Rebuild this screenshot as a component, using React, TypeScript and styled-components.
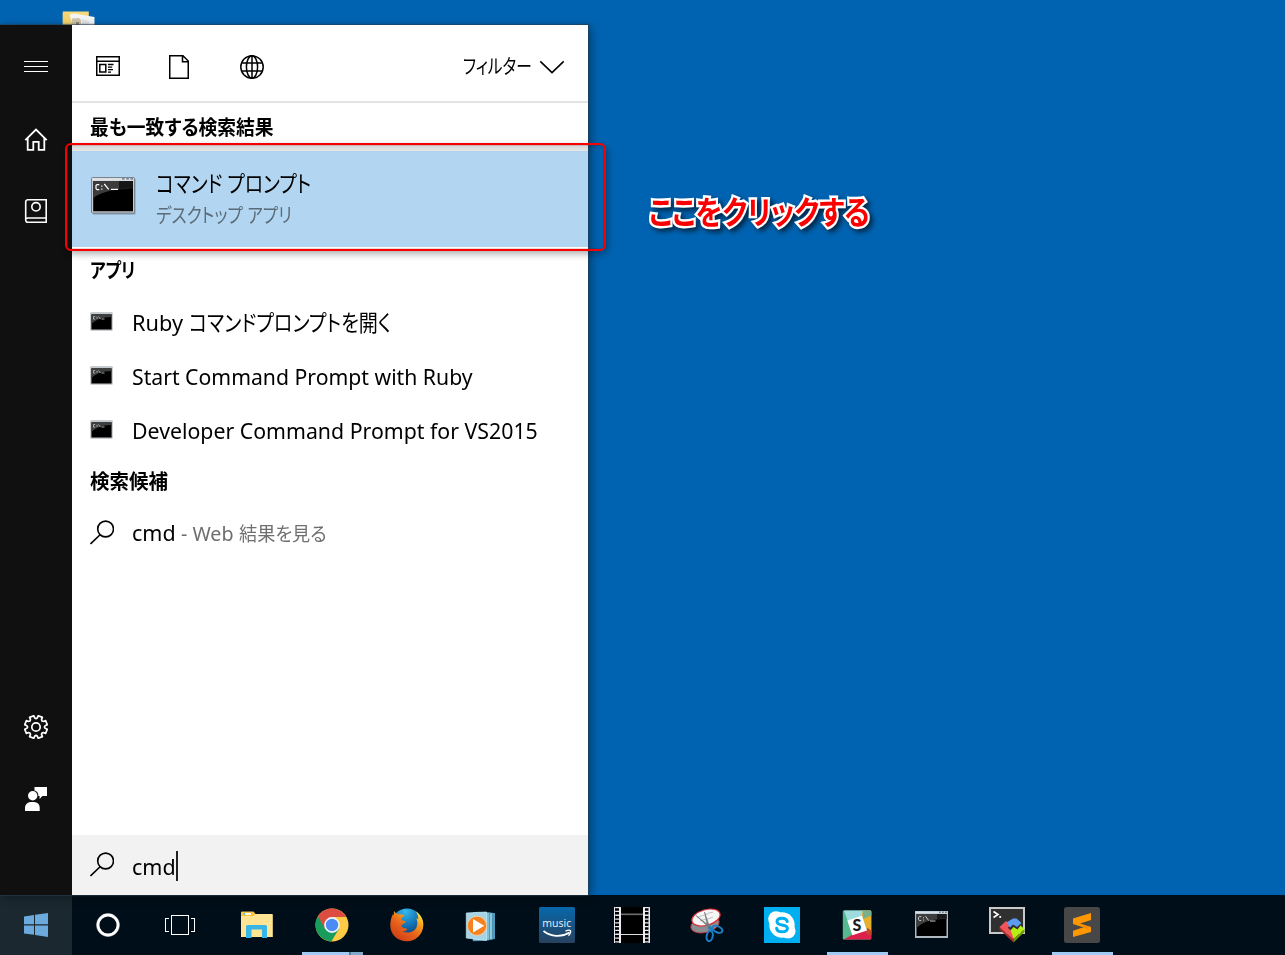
import React, { useLayoutEffect, useRef } from "react";
import styled, { createGlobalStyle, css } from "styled-components";

const GlobalStyle = createGlobalStyle`
  * { box-sizing: border-box; }
  body {
    margin: 0;
    background: #0063b1;
    font-family: "Noto Sans", "Noto Sans CJK JP", sans-serif;
    overflow: hidden;
  }
  svg { display: block; flex: none; }
`;

/* ---------- text that is condensed to a given advance width ---------- */

const FitBox = styled.span<{ $w: number }>`
  display: inline-block;
  width: ${(p) => p.$w}px;
  white-space: nowrap;
`;
const FitInner = styled.span`
  display: inline-block;
  transform-origin: 0 50%;
  font-feature-settings: "palt";
`;
function Fit({ w, children }: { w: number; children: React.ReactNode }) {
  const ref = useRef<HTMLSpanElement>(null);
  useLayoutEffect(() => {
    const el = ref.current;
    if (el && el.offsetWidth) el.style.transform = `scaleX(${w / el.offsetWidth})`;
  }, [w]);
  return (
    <FitBox $w={w}>
      <FitInner ref={ref}>{children}</FitInner>
    </FitBox>
  );
}

/* ---------- layout ---------- */

const Desktop = styled.div`
  position: relative;
  display: flex;
  flex-direction: column;
  width: 1285px;
  height: 955px;
  background: #0063b1;
  overflow: hidden;
`;
const Workspace = styled.div`
  display: flex;
  height: 895px;
  padding-top: 25px;
`;
const StartMenu = styled.div`
  position: relative;
  display: flex;
  width: 588px;
  box-shadow: 0 0 1px 1px rgba(40, 60, 80, 0.6), 3px 2px 9px rgba(0, 0, 0, 0.38);
`;
const Rail = styled.nav`
  display: flex;
  flex-direction: column;
  width: 72px;
  padding: 6px 0 60px;
  background: #101010;
`;
const RailItem = styled.div`
  display: flex;
  align-items: center;
  justify-content: center;
  width: 72px;
  height: 72px;
`;
const Grow = styled.div`
  flex: 1;
`;
const Panel = styled.section`
  display: flex;
  flex-direction: column;
  width: 516px;
  background: #fff;
  color: #000;
`;
const FilterBar = styled.header`
  display: flex;
  align-items: center;
  height: 78px;
  padding: 8px 23px 0 24px;
  border-bottom: 2px solid #e4e4e4;
`;
const FilterIcons = styled.div`
  display: flex;
  gap: 48px;
`;
const FilterMenu = styled.div`
  display: flex;
  align-items: center;
  gap: 7px;
  margin-left: auto;
  font-size: 20px;
  line-height: 24px;
`;
const Heading = styled.h2<{ $h: number; $drop?: number; $lift?: number }>`
  display: flex;
  align-items: center;
  height: ${(p) => p.$h}px;
  margin: 0;
  padding: ${(p) => p.$drop ?? 0}px 0 ${(p) => p.$lift ?? 0}px 18px;
  font-size: 20px;
  line-height: 28px;
  font-weight: 700;
`;
const BestMatch = styled.div`
  display: flex;
  align-items: center;
  gap: 20px;
  height: 102px;
  padding-left: 18px;
  border-top: 6px solid #e9e9e9;
  background: #b2d6f1;
`;
const BestIcon = styled.div`
  padding: 0 0 7px 1px;
`;
const BestText = styled.div`
  display: flex;
  flex-direction: column;
`;
const BestTitle = styled.div`
  font-size: 23px;
  line-height: 32px;
`;
const BestSub = styled.div`
  padding-top: 1px;
  font-size: 20px;
  line-height: 32px;
  color: #5b6b78;
`;
const Result = styled.div`
  display: flex;
  align-items: center;
  gap: 18px;
  height: 54px;
  padding-left: 18px;
  font-size: 22.5px;
  line-height: 30px;
`;
const Hint = styled.span`
  display: inline-block;
  margin-left: 5px;
  font-size: 19px;
  color: #6f6f6f;
`;
const SearchBox = styled.div`
  display: flex;
  align-items: center;
  gap: 18px;
  height: 60px;
  margin-top: auto;
  padding-left: 18px;
  background: #f2f2f2;
  font-size: 22.5px;
  line-height: 30px;
`;
const Query = styled.div`
  display: flex;
  align-items: center;
  padding-top: 2px;
`;
const QueryText = styled.div`
  padding-top: 2px;
`;
const Caret = styled.div`
  width: 2px;
  height: 30px;
  margin-bottom: 1px;
  background: #222;
`;

/* ---------- desktop overlays ---------- */

const FolderSpot = styled.div`
  position: absolute;
  left: 62px;
  top: 10px;
`;
const Marker = styled.div`
  position: absolute;
  left: 65px;
  top: 143px;
  width: 541px;
  height: 108px;
  border: 2px solid #f60000;
  border-radius: 6px;
  box-shadow: 2px 3px 7px rgba(0, 0, 0, 0.32), inset 0 0 0 1px rgba(120, 0, 0, 0.14),
    inset 2px 3px 5px rgba(0, 0, 0, 0.1);
`;
const Callout = styled.div`
  position: absolute;
  left: 649px;
  top: 190px;
  font-size: 32px;
  line-height: 44px;
  font-weight: 700;
  color: #fa0000;
  -webkit-text-stroke: 5px #fff;
  paint-order: stroke fill;
  stroke-linejoin: round;
  filter: drop-shadow(3px 3px 2.5px rgba(0, 0, 0, 0.6));
`;

/* ---------- taskbar ---------- */

const Taskbar = styled.footer`
  display: flex;
  height: 60px;
  background: #000e19;
`;
const SystemButton = styled.div<{ $active?: boolean }>`
  display: flex;
  align-items: center;
  justify-content: center;
  width: 72px;
  background: ${(p) => (p.$active ? "#1b2830" : "transparent")};
`;
const Pinned = styled.div`
  display: flex;
  padding-left: 4px;
`;
const AppButton = styled.div<{ $running?: boolean; $stacked?: boolean }>`
  display: flex;
  flex-direction: column;
  align-items: center;
  width: 75px;
  padding: 12px 1px 0 0;
  &::after {
    content: "";
    width: 61px;
    height: 3px;
    margin: 9px -1px 0 0;
    background: ${(p) => (p.$running ? "#9fcbf5" : "transparent")};
    ${(p) =>
      p.$stacked &&
      css`
        background: linear-gradient(90deg, #9fcbf5 47px, #5c7b94 47px, #5c7b94 49px, #83a9ca 49px);
      `}
  }
`;

/* ---------- icons ---------- */

const MenuIcon = () => (
  <svg width="24" height="24" viewBox="0 0 24 24" fill="#fff" shapeRendering="crispEdges">
    <path d="M0 6h24v1H0zM0 11h24v1H0zM0 16h24v1H0z" />
  </svg>
);
const HomeIcon = () => (
  <svg width="24" height="24" viewBox="0 0 24 24" fill="none" stroke="#fff" strokeWidth="1.8">
    <path d="M1.3 13.2 12 2.6l10.7 10.6M3.700 11.300v11.500h5.600v-8h5.400v8h5.600V11.300" />
  </svg>
);
const BookIcon = () => (
  <svg width="24" height="26" viewBox="0 0 24 26" fill="none" stroke="#fff" strokeWidth="1.6">
    <path d="M22.2 24.2H4a2.3 2.3 0 0 1-2.3-2.3V3.7A2.3 2.3 0 0 1 4 1.7h18.2zM2 21c.3-.7 1-1 2-1h18" />
    <circle cx="12" cy="8.8" r="4.2" />
  </svg>
);
const gearPath = (() => {
  const parts: string[] = [];
  const pt = (r: number, deg: number) => {
    const a = (deg * Math.PI) / 180;
    return `${(12 + r * Math.cos(a)).toFixed(2)} ${(12 + r * Math.sin(a)).toFixed(2)}`;
  };
  for (let i = 0; i < 8; i++) {
    const c = i * 45 + 22.5;
    parts.push(`${i ? "L" : "M"}${pt(11.5, c - 11)}L${pt(11.5, c + 11)}L${pt(9.2, c + 14.5)}Q${pt(7.9, c + 22.5)} ${pt(9.2, c + 30.5)}`);
  }
  return parts.join("") + "Z";
})();
const GearIcon = () => (
  <svg width="24" height="24" viewBox="0 0 24 24" fill="none" stroke="#fff" strokeWidth="1.7" strokeLinejoin="round">
    <path d={gearPath} />
    <circle cx="12" cy="12" r="4.2" />
  </svg>
);
const FeedbackIcon = () => (
  <svg width="24" height="24" viewBox="0 0 24 24" fill="#fff">
    <path d="M10.5 0H23v9h-4.6l-2.8 2.9V9h-1.2A5.6 5.6 0 0 0 10.5 3.4z" />
    <circle cx="8.7" cy="8.8" r="4.7" />
    <path d="M1 24v-3.4A5.6 5.6 0 0 1 6.6 15H10a5.6 5.6 0 0 1 5.7 5.6V24z" />
  </svg>
);
const AppsIcon = () => (
  <svg width="24" height="24" viewBox="0 0 24 24" fill="none" stroke="#000" strokeWidth="1.5">
    <path d="M.75 1.75h22.5v18.5H.75zM.75 6.2h22.5M3.8 9.5h6v7.6h-6z" />
    <path d="M12 9.5h5.5M12 12.2h4.2M12 14.6h5M12 17.1h3" strokeWidth="1.3" />
  </svg>
);
const DocIcon = () => (
  <svg width="24" height="24" viewBox="0 0 24 24" fill="none" stroke="#000" strokeWidth="1.5">
    <path d="M1.75.75h13.2l5.3 5.3v17.2H1.75zM14.5.75v5.9h5.7" />
  </svg>
);
const GlobeIcon = () => (
  <svg width="24" height="24" viewBox="0 0 24 24" fill="none" stroke="#000" strokeWidth="1.5">
    <circle cx="12" cy="12" r="11.2" />
    <ellipse cx="12" cy="12" rx="5.6" ry="11.2" />
    <path d="M12 1v22M1.6 8h20.8M1.6 16h20.8" />
  </svg>
);
const ChevronIcon = () => (
  <svg width="26" height="14" viewBox="0 0 26 14" fill="none" stroke="#000" strokeWidth="1.6">
    <path d="M1.3 1.4 13 12.6 24.7 1.4" />
  </svg>
);
const SearchIcon = () => (
  <svg width="24" height="26" viewBox="0 0 24 26" fill="none" stroke="#000" strokeWidth="1.6">
    <circle cx="15.6" cy="9" r="7.9" />
    <path d="M10.1 14.7.5 24" />
  </svg>
);

const ConsoleLarge = ({ w, h }: { w: number; h: number }) => (
  <svg width={w} height={h} viewBox="0 0 45 38">
    <rect x="1.5" y="1.5" width="43" height="36" rx="1" fill="#6c8296" opacity=".7" />
    <rect x=".5" y=".5" width="43" height="35.5" rx="1" fill="#c9cdd1" stroke="#7b8288" />
    <rect x="1.5" y="1.2" width="41" height="2.4" fill="#dfe3e7" />
    <path d="M31 1.8h2.6M35.3 1.8h2.6M39.4 1.8H42" stroke="#5a6c84" strokeWidth="1.2" />
    <rect x="2.2" y="4" width="39.8" height="30.3" fill="#000" />
    <path d="M2.2 4H38v8C22 11.500 9 16 2.200 21z" fill="#3c3c3c" />
    <path d="M28 4h14v8c-5-.3-10-.1-14 .2z" fill="#161616" />
    <path
      d="M8.300 7.600H6L5 8.600v3l1 1H8.300M10.800 8.400v1.300M10.800 11.400v1.300M13.300 7l4.400 5.400"
      stroke="#fff"
      strokeWidth="1.2"
      fill="none"
    />
    <path d="M20 12.400h7" stroke="#fff" strokeWidth="1.2" />
  </svg>
);
const ConsoleSmallSvg = styled.svg`
  margin-bottom: 2px;
`;
const ConsoleSmall = () => (
  <ConsoleSmallSvg width="24" height="20" viewBox="0 0 24 20">
    <rect x=".5" y=".5" width="22" height="18" rx=".6" fill="#9da2a7" />
    <rect x=".5" y=".5" width="22" height="1.600" fill="#c3c9ce" />
    <rect x="1.500" y="2.400" width="20" height="15" fill="#000" />
    <path d="M1.500 2.400h20V5C12 5 5.500 8 1.500 12z" fill="#3d3f3f" />
    <path d="M5.200 4.500H3.500v2.600h1.700M7 4.800v2M8.500 4.500l2 2.600M11.500 7h3" stroke="#b5b5b5" strokeWidth=".9" fill="none" />
  </ConsoleSmallSvg>
);

const FolderPeek = () => (
  <svg width="33" height="15" viewBox="0 0 33 15">
    <path d="M.8 1.500h26V15H.8z" fill="#f6da7c" />
    <path d="M4 5.500 12 3.500l20.500 3.500V15H9z" fill="#f4f5f5" />
    <path d="M.8 3h6l4 12H.8z" fill="#f3d470" />
    <path d="M10 8.500l7-.5 2 2v5h-9z" fill="#cfc5ad" />
    <path d="M14 12h3v3h-3z" fill="#8f866f" />
    <path d="M20 9l7 2v4h-7z" fill="#e2e4e5" />
  </svg>
);

const WindowsIcon = () => (
  <svg width="24" height="24" viewBox="0 0 24 24" fill="#6ca9dc">
    <path d="M0 3.400 10 2v9.300H0zM11 1.800 24 0v11.300H11zM0 12.400h10v9.400L0 20.500zM11 12.400h13V24l-13-1.900z" />
  </svg>
);
const CortanaIcon = () => (
  <svg width="24" height="24" viewBox="0 0 24 24" fill="none">
    <circle cx="12" cy="12" r="10" stroke="#fff" strokeWidth="2.800" />
    <circle cx="12" cy="12" r="11.500" stroke="#fff" strokeWidth=".8" opacity=".5" />
  </svg>
);
const TaskViewIcon = () => (
  <svg width="30" height="20" viewBox="0 0 30 20" fill="none" stroke="#fff" strokeWidth="1" shapeRendering="crispEdges">
    <path d="M6.500.5h17v19h-17zM4 3.500H.5v13H4M26 3.500h3.500v13H26" />
  </svg>
);
const ExplorerIcon = () => (
  <svg width="36" height="36" viewBox="0 0 36 36">
    <path d="M2 5.500q0-.8.8-.8h11.700l1.800 2.300H33q.8 0 .8.800V30H2z" fill="#ffe593" />
    <path d="M2 5.500q0-.8.8-.8h11.700l1.800 2.100-1.300 2.200H2z" fill="#fac43b" />
    <path d="M4.500 6h7.500v1.800H4.500z" fill="#fff" />
    <path d="M4.500 6h1.700v1.800H4.500z" fill="#3bb4e5" />
    <path d="M7 31V19.500q0-1.500 1.500-1.500h18q1.500 0 1.500 1.500V31h-5v-8.500H12.500V31z" fill="#38b5e8" />
  </svg>
);
const ChromeIcon = () => (
  <svg width="36" height="36" viewBox="0 0 36 36">
    <circle cx="18" cy="18" r="16.500" fill="#fdcb45" />
    <path d="M18 18 3.700 9.750A16.500 16.500 0 0 0 17.300 34.500L25.200 21.500z" fill="#179c5b" />
    <path d="M18 10h14.400A16.500 16.500 0 0 0 4 9.300L10.600 21z" fill="#dc4c40" />
    <circle cx="18" cy="18" r="7.900" fill="#f3f5f5" />
    <circle cx="18" cy="18" r="6.200" fill="#4c8bf5" />
  </svg>
);
const FirefoxIcon = () => (
  <svg width="36" height="36" viewBox="0 0 36 36">
    <defs>
      <radialGradient id="ffglobe" cx=".45" cy=".1" r=".9">
        <stop offset="0" stopColor="#35b8ec" />
        <stop offset=".5" stopColor="#1273b5" />
        <stop offset="1" stopColor="#142a62" />
      </radialGradient>
      <linearGradient id="fffox" x1="1" y1=".1" x2=".3" y2="1">
        <stop offset="0" stopColor="#fff04a" />
        <stop offset=".3" stopColor="#f5a01d" />
        <stop offset=".6" stopColor="#e8641b" />
        <stop offset="1" stopColor="#cf3f16" />
      </linearGradient>
    </defs>
    <circle cx="18" cy="17" r="15.500" fill="url(#ffglobe)" />
    <path
      d="M27 4.500c6 4 7.800 9.500 7.300 14.500C33.500 28 26.500 34.300 18 34.300 8.500 34.300 1.300 27.500 1.300 18.500c0-4.500 1-8.500 2.700-11.500l.6 1.800C5 6.500 4.500 5.500 5.300 4c1 2.500 3 3.200 5.500 3.200 1.800 0 4 .6 4.700 1.400-1.200 1.500-3 2-3.200 4.200 1.200 1.300 3.600.8 4.400 1.700-.5 2-3.200 2.200-4.300 4.200.7 3 3.900 1.900 6 3.300-1 1.700-3 2.400-4.900 2.200 6 3.300 13 .4 14.400-5.200.8-3.500.2-6-.7-8l2 1.200c.3-3-.6-5.200-2.200-7.500z"
      fill="url(#fffox)"
    />
  </svg>
);
const MediaSvg = styled.svg`
  margin-left: -3px;
`;
const MediaIcon = () => (
  <MediaSvg width="36" height="36" viewBox="0 0 36 36">
    <path d="M14 5.200 32 6v26L14 33.500z" fill="#4f9bbd" />
    <path d="M13 5.200 29.500 6v26.500L13 33.500z" fill="#8cc8de" stroke="#397f9f" strokeWidth=".6" />
    <path d="M10 5.500 26.500 5.500v27.500L10 34z" fill="#7dbfd9" stroke="#397f9f" strokeWidth=".6" />
    <path d="M3.300 6 23.500 5v28.500L3.300 31z" fill="#a4d4e6" stroke="#c9e9f2" strokeWidth=".7" />
    <circle cx="14" cy="18.800" r="9.600" fill="#f5821f" stroke="#fbd3a8" strokeWidth=".8" />
    <path d="M10 12v13.500L21.200 18.800z" fill="#fff" />
  </MediaSvg>
);
const MusicLabel = styled.text`
  font-family: "Open Sans", sans-serif;
  font-size: 10.5px;
  fill: #e8f1f8;
`;
const AmazonMusicIcon = () => (
  <svg width="36" height="36" viewBox="0 0 36 36">
    <defs>
      <linearGradient id="amz" x1="0" y1="0" x2="0" y2="1">
        <stop offset="0" stopColor="#0768ab" />
        <stop offset="1" stopColor="#28415f" />
      </linearGradient>
    </defs>
    <rect width="36" height="36" rx="1.500" fill="url(#amz)" />
    <MusicLabel x="3.200" y="20.300" textLength="29">
      music
    </MusicLabel>
    <path d="M4.500 24c7.500 6 18 6.400 26 1.500" fill="none" stroke="#fff" strokeWidth="1.800" />
    <path d="M26.500 24.200c2-1 4.200-1.200 5-.5.400 1.200-.5 3.400-2 5" fill="none" stroke="#fff" strokeWidth="1.300" />
  </svg>
);
const FilmIcon = () => (
  <svg width="36" height="36" viewBox="0 0 36 36">
    <rect width="36" height="36" fill="#000" />
    <path d="M0 0h1v36H0zM5 0h2v36H5zM29 0h2v36h-2zM34.500 0H36v36h-1.500z" fill="#efeaf2" />
    <path d="M3.200 0v36M32.800 0v36" stroke="#efeaf2" strokeWidth="4" strokeDasharray="1.300 2.500" />
    <path d="M7 6.500h22v1.600H7z" fill="#6f6f6f" />
    <path d="M7 27h22v1H7z" fill="#dedede" />
  </svg>
);
const SnipIcon = () => (
  <svg width="36" height="36" viewBox="0 0 36 36">
    <ellipse cx="16" cy="17.500" rx="14.500" ry="8" transform="rotate(-14 16 17.500)" fill="#8a8d91" stroke="#c53037" strokeWidth=".8" />
    <ellipse cx="17" cy="10.500" rx="14.500" ry="7.800" transform="rotate(-16 17 10.500)" fill="#f6f6f7" stroke="#dc2f35" strokeWidth="1.200" />
    <path d="M8 11c4-3 7-2 10-4s5-1 6-2M11 14c4-2 7-1 13-4" stroke="#bcbfc4" fill="none" />
    <path d="M7 8.500 23 21 21.500 22zM15.500 5l5.500 16-2 1z" fill="#777d84" stroke="#777" strokeWidth=".6" />
    <ellipse cx="28.500" cy="22.300" rx="5.200" ry="3" transform="rotate(25 28.500 22.300)" fill="none" stroke="#1a7fc9" strokeWidth="2" />
    <ellipse cx="20.700" cy="29" rx="3" ry="5.200" transform="rotate(12 20.700 29)" fill="none" stroke="#1a7fc9" strokeWidth="2" />
    <path d="M20 20l4 3" stroke="#1a7fc9" strokeWidth="3" />
  </svg>
);
const SkypeIcon = () => (
  <svg width="36" height="36" viewBox="0 0 36 36">
    <rect width="36" height="36" fill="#00aff0" />
    <circle cx="12" cy="12" r="7.800" fill="#fff" />
    <circle cx="24" cy="24" r="7.600" fill="#fff" />
    <circle cx="18" cy="18" r="12.700" fill="#fff" />
    <path
      d="M23.200 14.600c-.4-2.200-2.300-3.300-5.200-3.300-3 0-5 1.200-5 3.400 0 4.600 10.400 1.900 10.400 6.600 0 2.300-2.200 3.500-5.200 3.500s-5.200-1.200-5.600-3.600"
      fill="none"
      stroke="#00aff0"
      strokeWidth="3"
      strokeLinecap="round"
    />
  </svg>
);
const SlackLetter = styled.text`
  font-family: Lato, sans-serif;
  font-size: 16px;
  font-weight: 900;
  fill: #1d1c22;
`;
const SlackIcon = () => (
  <svg width="36" height="36" viewBox="0.2 0 36 36">
    <defs>
      <clipPath id="slk">
        <rect x="4" y="3.500" width="28.500" height="29" rx="1.200" />
      </clipPath>
    </defs>
    <g clipPath="url(#slk)">
      <rect x="3" y="3" width="30" height="30" fill="#55b88e" />
      <path d="M5 3h21l-3 7-14 4z" fill="#9fdcdd" />
      <path d="M24 3h10v24l-6-5-5-13z" fill="#e8af2b" />
      <path d="M24 3h10v5l-10 4z" fill="#78b08f" />
      <path d="M4 33 13 28l16-6 5 3v8z" fill="#dc1f4b" />
      <path d="m26 23 3-2 5 4v4l-6-2z" fill="#c7472a" />
      <path d="m8.500 13.500 14.700-4.700 5 14.600-14.700 4.800z" fill="#fff" />
    </g>
    <SlackLetter x="13.800" y="23.800">
      S
    </SlackLetter>
  </svg>
);
const CmdTaskIcon = () => (
  <svg width="36" height="36" viewBox="1 0 36 36">
    <rect x="2" y="4" width="33" height="27" fill="#aeb8be" />
    <rect x="2.500" y="4.500" width="32" height="2" fill="#d3e0e8" />
    <path d="M26 5.200h1.600M29 5.200h1.600M32 5.200h1.600" stroke="#345" />
    <rect x="3.500" y="7" width="30" height="22" fill="#000" />
    <path d="M3.500 7h30v5C18 11.500 9 15.500 3.500 21z" fill="#3c3d3d" />
    <path d="M24 7h9.500v5c-3.500-.3-6.500 0-9.500.2z" fill="#191919" />
    <path d="M8.200 9.600H6.400l-.8.900v2.200l.8.900h1.800M10.500 10.300v1M10.500 12.600v1M12.500 9.200l3.200 4.400M17 14h5.500" stroke="#ddd" fill="none" strokeWidth=".9" />
  </svg>
);
const ConEmuIcon = () => (
  <svg width="36" height="36" viewBox="0 0 36 36">
    <rect x="0" y="0" width="36" height="27" fill="#c9c9c9" />
    <rect x="2" y="2" width="32" height="23" fill="#303031" />
    <path d="M4.500 4.500 9 7.500l-4.500 3" fill="none" stroke="#fff" strokeWidth="1.600" />
    <rect x="10.300" y="9" width="1.800" height="1.800" fill="#fff" />
    <path d="M10.500 20 24.500 32v3.500L10.500 22.500z" fill="#a02b30" />
    <path d="m10.500 20 6.500-6 4.500 4-2.800 2.700 5.800 5.300 1 1.500-1.500 4.500z" fill="#f15458" />
    <path d="m17.500 15.500 6.500-4h3.500l5 4.500-4.500 4-4-2.500-3 3z" fill="#5c9bf2" />
    <path d="m24.500 32 11-10v3L24.500 35.500z" fill="#6f9a00" />
    <path d="m21.500 23.500 3-3.500 4 2.500 3-4 4 3.500-11 10-1-4z" fill="#b7ee13" />
  </svg>
);
const SublimeIcon = () => (
  <svg width="36" height="36" viewBox="0 0 36 36">
    <rect width="36" height="36" rx="2.500" fill="#474747" />
    <path d="M27 6v7l-11 3.600 11 3.400v5L9 30v-6.200l10.500-3.600L9 17v-5.500z" fill="#ff9800" />
    <path d="M9 17l18 3-4 2.200-3.500-2z" fill="#f08c00" />
  </svg>
);

const pinnedApps: { name: string; icon: React.ReactNode; running?: boolean; stacked?: boolean }[] = [
  { name: "explorer", icon: <ExplorerIcon /> },
  { name: "chrome", icon: <ChromeIcon />, running: true, stacked: true },
  { name: "firefox", icon: <FirefoxIcon /> },
  { name: "media", icon: <MediaIcon /> },
  { name: "amazon", icon: <AmazonMusicIcon /> },
  { name: "film", icon: <FilmIcon /> },
  { name: "snip", icon: <SnipIcon /> },
  { name: "skype", icon: <SkypeIcon /> },
  { name: "slack", icon: <SlackIcon />, running: true },
  { name: "cmd", icon: <CmdTaskIcon /> },
  { name: "conemu", icon: <ConEmuIcon /> },
  { name: "sublime", icon: <SublimeIcon />, running: true },
];

export default function App() {
  return (
    <>
      <GlobalStyle />
      <Desktop>
        <FolderSpot>
          <FolderPeek />
        </FolderSpot>
        <Workspace>
          <StartMenu>
            <Rail>
              <RailItem><MenuIcon /></RailItem>
              <RailItem><HomeIcon /></RailItem>
              <RailItem><BookIcon /></RailItem>
              <Grow />
              <RailItem><GearIcon /></RailItem>
              <RailItem><FeedbackIcon /></RailItem>
            </Rail>
            <Panel>
              <FilterBar>
                <FilterIcons>
                  <AppsIcon />
                  <DocIcon />
                  <GlobeIcon />
                </FilterIcons>
                <FilterMenu>
                  <Fit w={69}>フィルター</Fit>
                  <ChevronIcon />
                </FilterMenu>
              </FilterBar>
              <Heading $h={42} $drop={8}>
                <Fit w={184}>最も一致する検索結果</Fit>
              </Heading>
              <BestMatch>
                <BestIcon><ConsoleLarge w={45} h={38} /></BestIcon>
                <BestText>
                  <BestTitle><Fit w={155}>コマンド プロンプト</Fit></BestTitle>
                  <BestSub><Fit w={136}>デスクトップ アプリ</Fit></BestSub>
                </BestText>
              </BestMatch>
              <Heading $h={49} $lift={2}>
                <Fit w={45}>アプリ</Fit>
              </Heading>
              <Result>
                <ConsoleSmall />
                <span>
                  <Fit w={57}>Ruby&nbsp;</Fit>
                  <Fit w={202}>コマンドプロンプトを開く</Fit>
                </span>
              </Result>
              <Result>
                <ConsoleSmall />
                <Fit w={341}>Start Command Prompt with Ruby</Fit>
              </Result>
              <Result>
                <ConsoleSmall />
                <Fit w={406}>Developer Command Prompt for VS2015</Fit>
              </Result>
              <Heading $h={48}>
                <Fit w={78}>検索候補</Fit>
              </Heading>
              <Result>
                <SearchIcon />
                <span>
                  <Fit w={44}>cmd</Fit>
                  <Hint>
                    <Fit w={58}>- Web&nbsp;</Fit>
                    <Fit w={88}>結果を見る</Fit>
                  </Hint>
                </span>
              </Result>
              <SearchBox>
                <SearchIcon />
                <Query>
                  <QueryText><Fit w={44}>cmd</Fit></QueryText>
                  <Caret />
                </Query>
              </SearchBox>
            </Panel>
          </StartMenu>
        </Workspace>
        <Taskbar>
          <SystemButton $active><WindowsIcon /></SystemButton>
          <SystemButton><CortanaIcon /></SystemButton>
          <SystemButton><TaskViewIcon /></SystemButton>
          <Pinned>
            {pinnedApps.map((app) => (
              <AppButton key={app.name} $running={app.running} $stacked={app.stacked}>
                {app.icon}
              </AppButton>
            ))}
          </Pinned>
        </Taskbar>
        <Marker />
        <Callout><Fit w={221}>ここをクリックする</Fit></Callout>
      </Desktop>
    </>
  );
}
